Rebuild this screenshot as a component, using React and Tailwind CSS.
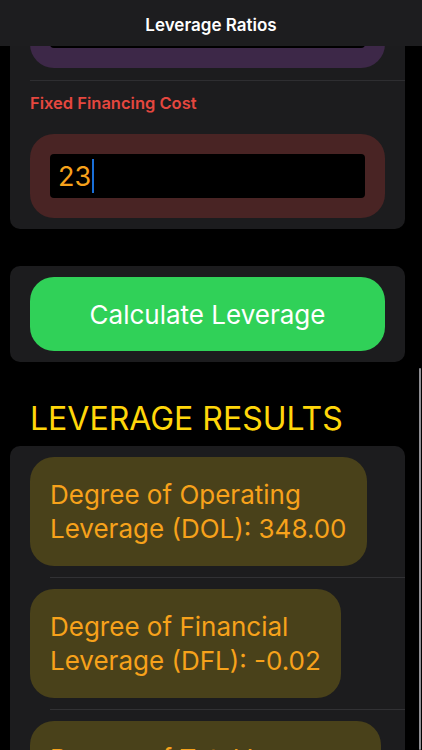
import { useState } from "react";

const font = { fontFamily: "Inter, 'Noto Sans', sans-serif" };

function ResultBox({ first, second }) {
    return (
        <div className="w-fit max-w-[355px] rounded-[24px] bg-[#49411a] px-5 py-[21px] text-[26px] leading-[33.5px] text-[#f7a21b]">
            {first}
            <br />
            {second}
        </div>
    );
}

function Divider({ inset }) {
    return <div className={`h-px bg-[#313134] ${inset}`} />;
}

export default function App() {
    const [cost] = useState("23");

    const results = [
        { first: "Degree of Operating", second: "Leverage (DOL): 348.00" },
        { first: "Degree of Financial", second: "Leverage (DFL): -0.02" },
        { first: "Degree of Total Leverage", second: "(DTL): -7.66" },
    ];

    return (
        <div className="relative h-[750px] w-[422px] overflow-hidden bg-black" style={font}>
            {/* nav bar */}
            <header className="absolute inset-x-0 top-0 z-10 flex h-[46px] items-center justify-center bg-[#1d1d1f] pt-[5px]">
                <p className="text-[17px] font-semibold text-white">Leverage Ratios</p>
            </header>

            {/* scroll indicator */}
            <div className="absolute right-[1px] top-[368px] bottom-0 z-10 w-[2px] rounded-full bg-[#8d8d92]" />

            <main className="-mt-[28px] flex flex-col pl-[10px] pr-[17px]">
                {/* inputs card */}
                <section className="rounded-[10px] bg-[#1c1c1e] pb-[11px] pl-5 pt-3">
                    <div className="mr-5 rounded-[24px] bg-[#3d2848] p-5">
                        <div className="h-[44px] rounded-[4px] bg-black" />
                    </div>
                    <div className="mt-3 h-px bg-[#2e2e31]" />
                    <p className="mt-3 text-[16.5px] font-semibold leading-5 text-[#e5473f]">
                        Fixed Financing Cost
                    </p>
                    <div className="mr-5 mt-[21px] rounded-[24px] bg-[#492424] p-5">
                        <div className="flex h-[44px] items-center rounded-[4px] bg-black pl-2">
                            <span className="text-[27px] leading-none text-[#f7a21b]">{cost}</span>
                            <span className="ml-[1px] h-[34px] w-[2px] bg-[#1a6fd8]" />
                        </div>
                    </div>
                </section>

                {/* button card */}
                <section className="mt-[37px] rounded-[10px] bg-[#1c1c1e] px-5 py-[11px]">
                    <button className="flex h-[74px] w-full items-center justify-center rounded-[24px] bg-[#30d158] text-[26px] text-white">
                        Calculate Leverage
                    </button>
                </section>

                <h2 className="mt-[37px] px-5 text-[32px] leading-10 text-[#ffd60a]">LEVERAGE RESULTS</h2>

                {/* results card */}
                <section className="mt-[7px] rounded-[10px] bg-[#1c1c1e] pl-5 pt-[11px]">
                    {results.map((r, i) => (
                        <div key={r.second}>
                            {i > 0 && <Divider inset="ml-5 my-[11px]" />}
                            <ResultBox first={r.first} second={r.second} />
                        </div>
                    ))}
                </section>
            </main>
        </div>
    );
}
